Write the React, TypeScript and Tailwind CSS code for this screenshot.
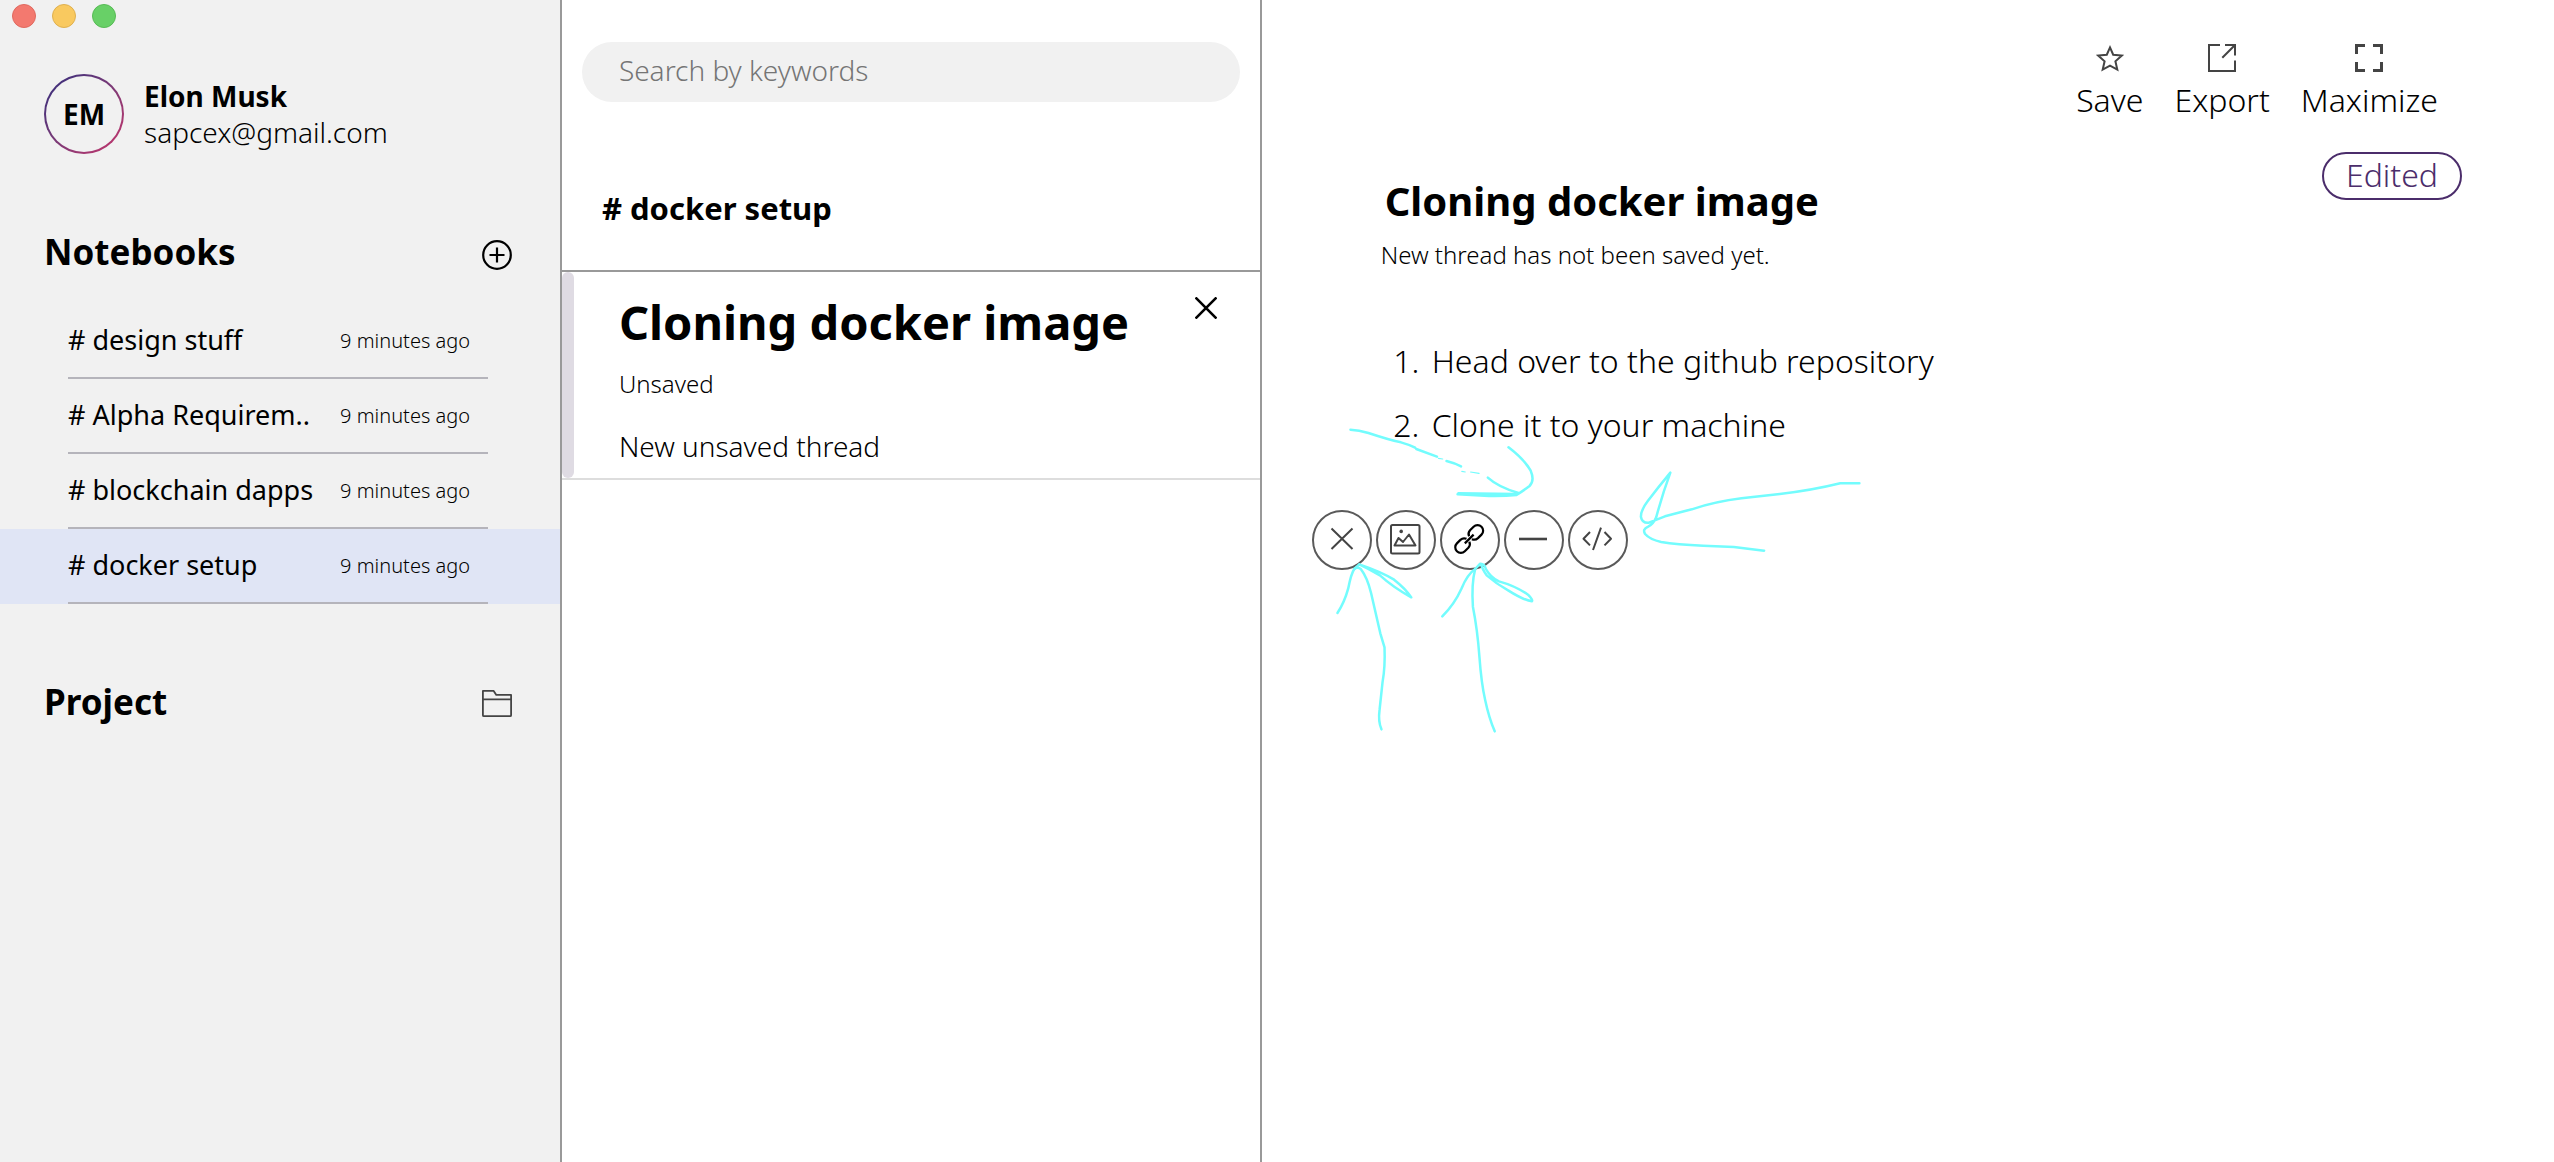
import type { ReactNode } from 'react';

const notebooks = [
  { name: '# design stuff', time: '9 minutes ago', active: false },
  { name: '# Alpha Requirem..', time: '9 minutes ago', active: false },
  { name: '# blockchain dapps', time: '9 minutes ago', active: false },
  { name: '# docker setup', time: '9 minutes ago', active: true },
];

const PlusIcon = () => (
  <svg width="30" height="30" viewBox="0 0 30 30" fill="none" stroke="#000" strokeWidth="2.2" aria-hidden="true">
    <circle cx="15" cy="15" r="13.8" />
    <path d="M15 7.5v15M7.5 15h15" />
  </svg>
);

const FolderIcon = () => (
  <svg width="30" height="30" viewBox="0 0 30 30" fill="none" stroke="#444" strokeWidth="1.8" strokeLinejoin="round" aria-hidden="true">
    <path d="M.9 25.2V.9h10.8l2.600 4h14.8v20.3q0 1-1 1H1.9q-1 0-1-1zM.9 9.4h28.2" />
  </svg>
);

const StarIcon = () => (
  <svg width="28" height="28" viewBox="0 0 28 28" fill="none" stroke="#444" strokeWidth="2" aria-hidden="true">
    <path d="M14 3.400l3.200 7.300 8.700.9-6.500 5.700 1.900 8.300L14 21.600l-7.300 4 1.900-8.300-6.500-5.700 8.700-.9z" />
  </svg>
);

const ExportIcon = () => (
  <svg width="28" height="28" viewBox="0 0 28 28" fill="none" stroke="#444" strokeWidth="2" aria-hidden="true">
    <path d="M12 1H1v26h26V16.500M17 1h10v10.500M27 1L14.300 13.700" />
  </svg>
);

const MaximizeIcon = () => (
  <svg width="28" height="28" viewBox="0 0 28 28" fill="none" stroke="#444" strokeWidth="3" aria-hidden="true">
    <path d="M10 1.500H1.500V10M18 1.500h8.500V10M26.500 18v8.500H18M10 26.500H1.500V18" />
  </svg>
);

const blocks: { label: string; icon: ReactNode }[] = [
  { label: 'Close', icon: <path d="M19.500 18.500l21 20.500M40.500 18.500l-21 20.500" /> },
  {
    label: 'Image',
    icon: (
      <>
        <rect x="15" y="15" width="28.500" height="28.500" rx="1.500" />
        <path d="M18.500 35.500L22.500 28l4.500 4 6-7.500 6.500 11z" />
        <circle cx="25.200" cy="21.400" r="1.800" fill="#444" stroke="none" />
      </>
    ),
  },
  {
    label: 'Link',
    icon: (
      <g stroke="#000" strokeWidth="2.200" transform="rotate(-45 29.200 29)">
        <path d="M27.400 31a5.600 5.600 0 0 1-5 3.600h-5a5.600 5.600 0 0 1 0-11.200h5a5.600 5.600 0 0 1 5 3.600" />
        <path d="M31 27a5.600 5.600 0 0 1 5-3.600h5a5.600 5.600 0 0 1 0 11.200h-5a5.600 5.600 0 0 1-5-3.600" />
        <path d="M23 29h12.400" />
      </g>
    ),
  },
  { label: 'Divider', icon: <path strokeWidth="2.600" d="M15 29h28" /> },
  { label: 'Code', icon: <path d="M22 22l-6.500 6.700L22 35.400M36.500 22l6.500 6.700-6.500 6.700M33 17.700L25 40" /> },
];

function Action({ label, children }: { label: string; children: ReactNode }) {
  return (
    <button type="button" className="flex flex-col items-center gap-2 text-[32px] leading-10">
      {children}
      {label}
    </button>
  );
}

function Sketch() {
  return (
    <svg
      className="pointer-events-none absolute top-[400px] left-7 h-[350px] w-[600px]"
      viewBox="0 0 1568 1050"
      preserveAspectRatio="none"
      fill="none"
      stroke="#73fcfd"
      strokeWidth="2.500"
      strokeLinecap="round"
      strokeLinejoin="round"
      aria-hidden="true"
    >
      <path vectorEffect="non-scaling-stroke" d="M158 89Q180 90 205 99Q260 120 290 127Q312 134 327 143M330 147L384 170M409 183Q430 189 447 199M517 233Q545 262 597 279" />
      <path vectorEffect="non-scaling-stroke" strokeWidth="1.200" d="M388 175L399 177M449 214L458 216M472 216L494 220" />
      <path vectorEffect="non-scaling-stroke" d="M571 142Q612 178 629 212Q640 242 626 258Q610 272 592 285Q560 289 520 288L438 283L440 280L590 282" />
      <path vectorEffect="non-scaling-stroke" d="M1488 250H1438Q1360 272 1280 282L1180 295Q1110 305 1050 328L980 349L938 368Q920 370 917 350Q917 330 935 303Q965 258 994 218Q974 280 957 352Q950 372 936 380Q920 388 928 402Q940 418 970 426Q1010 434 1080 437L1160 441L1239 452" />
      <path vectorEffect="non-scaling-stroke" d="M124 639Q142 608 152 566Q160 520 168 507Q176 500 185 507Q202 532 212 580L236 700L247 742Q249 800 242 845L234 930Q230 964 239 988" />
      <path vectorEffect="non-scaling-stroke" d="M168 507L181 493Q240 516 272 539Q302 566 317 592Q270 562 235 526Q205 506 181 493" />
      <path vectorEffect="non-scaling-stroke" d="M398 649Q430 612 448 566Q464 522 484 507L497 491Q508 490 512 507Q524 532 546 544Q590 558 622 584Q636 600 632 604Q610 600 570 571Q540 552 514 526Q502 506 500 494" />
      <path vectorEffect="non-scaling-stroke" d="M484 507Q474 550 478 620Q490 690 495 770Q500 850 510 900Q520 954 535 994" />
    </svg>
  );
}

export default function App() {
  return (
    <div className="flex min-h-screen bg-white font-['Noto_Sans',sans-serif] font-light text-black">
      <aside className="w-[22%] shrink-0 border-r-2 border-[#999] bg-[#f1f1f1] pt-1">
        <div className="flex gap-4 pl-3">
          <button type="button" aria-label="Close window" className="size-6 rounded-full border border-[#e0695f] bg-[#f3796f]" />
          <button type="button" aria-label="Minimize window" className="size-6 rounded-full border border-[#dfb04f] bg-[#f9c95f]" />
          <button type="button" aria-label="Zoom window" className="size-6 rounded-full border border-[#57bb55] bg-[#68d067]" />
        </div>

        <div className="mt-[46px] flex items-center gap-5 pl-11">
          <div className="size-20 shrink-0 rounded-full bg-linear-to-br from-[#2f2a7c] to-[#c9306a] p-0.5">
            <div className="flex size-full items-center justify-center rounded-full bg-[#f1f1f1] text-[28px] font-bold">EM</div>
          </div>
          <div className="text-[28px] leading-9">
            <p className="font-bold">Elon Musk</p>
            <p>sapcex@gmail.com</p>
          </div>
        </div>

        <section className="mt-[74px]">
          <div className="flex items-end justify-between pr-12 pl-11">
            <h2 className="text-[35px] leading-[48px] font-bold">Notebooks</h2>
            <button type="button" aria-label="Add notebook" className="mb-1.5"><PlusIcon /></button>
          </div>
          <ul className="mt-7">
            {notebooks.map((n) => (
              <li key={n.name} className={n.active ? 'bg-[#e0e5f5]' : ''}>
                <button
                  type="button"
                  className="mr-[72px] ml-[68px] flex h-[75px] w-[420px] items-center justify-between border-b-2 border-[#b5b4bb] pr-[18px] text-left"
                >
                  <span className="w-64 overflow-hidden text-[27px] font-normal whitespace-nowrap">{n.name}</span>
                  <span className="shrink-0 text-[20px]">{n.time}</span>
                </button>
              </li>
            ))}
          </ul>
        </section>

        <section className="mt-[74px] flex items-end justify-between pr-12 pl-11">
          <h2 className="text-[35px] leading-[48px] font-bold">Project</h2>
          <button type="button" aria-label="Open project" className="mb-1.5"><FolderIcon /></button>
        </section>
      </aside>

      <section className="w-[27.4%] shrink-0 border-r-2 border-[#999] pt-[42px]">
        <div className="px-5">
          <input
            type="search"
            aria-label="Search by keywords"
            placeholder="Search by keywords"
            className="h-[60px] w-full rounded-full bg-[#f1f1f1] px-[37px] pb-1 text-[28px] outline-none placeholder:text-[#757575]"
          />
        </div>
        <h2 className="mt-[86px] border-b-2 border-[#999] px-10 pb-[42px] text-[31px] leading-10 font-bold"># docker setup</h2>
        <article className="flex border-b-2 border-[#ddd]">
          <div className="w-3 shrink-0 rounded-md bg-[#dfdbe3]" />
          <div className="flex-1 pt-[18px] pb-3 pl-[45px]">
            <h3 className="text-[47px] leading-[64px] font-bold whitespace-nowrap">Cloning docker image</h3>
            <p className="mt-3.5 text-[24px] leading-8">Unsaved</p>
            <p className="mt-[26px] text-[28px] leading-10">New unsaved thread</p>
          </div>
          <button type="button" aria-label="Discard thread" className="mt-[25px] mr-[43px] h-fit">
            <svg width="22" height="22" viewBox="0 0 22 22" stroke="#000" strokeWidth="2.6" aria-hidden="true">
              <path d="M.5.5l21 21M21.500.5l-21 21" />
            </svg>
          </button>
        </article>
      </section>

      <main className="relative flex-1 pt-11">
        <div className="flex justify-end gap-[31px] pr-[116px]">
          <Action label="Save"><StarIcon /></Action>
          <Action label="Export"><ExportIcon /></Action>
          <Action label="Maximize"><MaximizeIcon /></Action>
        </div>

        <div className="mt-8 flex items-start justify-between pr-[92px] pl-[119px]">
          <div className="pt-[23px]">
            <h1 className="pl-1 text-[40px] leading-[52px] font-bold">Cloning docker image</h1>
            <p className="mt-3 text-[24px] leading-8">New thread has not been saved yet.</p>
          </div>
          <span className="flex h-12 items-center rounded-full border-2 border-[#4b2d6b] px-[22px] pb-0.5 text-[32px] leading-10 text-[#4b2d6b]">Edited</span>
        </div>

        <ol className="mt-[58px] list-decimal pl-[166px] text-[32px] leading-[64px]">
          <li className="pl-1">Head over to the github repository</li>
          <li className="pl-1">Clone it to your machine</li>
        </ol>

        <div className="mt-[53px] ml-[50px] flex gap-1">
          {blocks.map((b) => (
            <button key={b.label} type="button" aria-label={b.label} className="size-[60px] rounded-full border-2 border-[#5a5a5a]">
              <svg className="-m-0.5 size-[60px]" viewBox="0 0 60 60" fill="none" stroke="#444" strokeWidth="2" strokeLinejoin="round" aria-hidden="true">
                {b.icon}
              </svg>
            </button>
          ))}
        </div>
        <Sketch />
      </main>
    </div>
  );
}
